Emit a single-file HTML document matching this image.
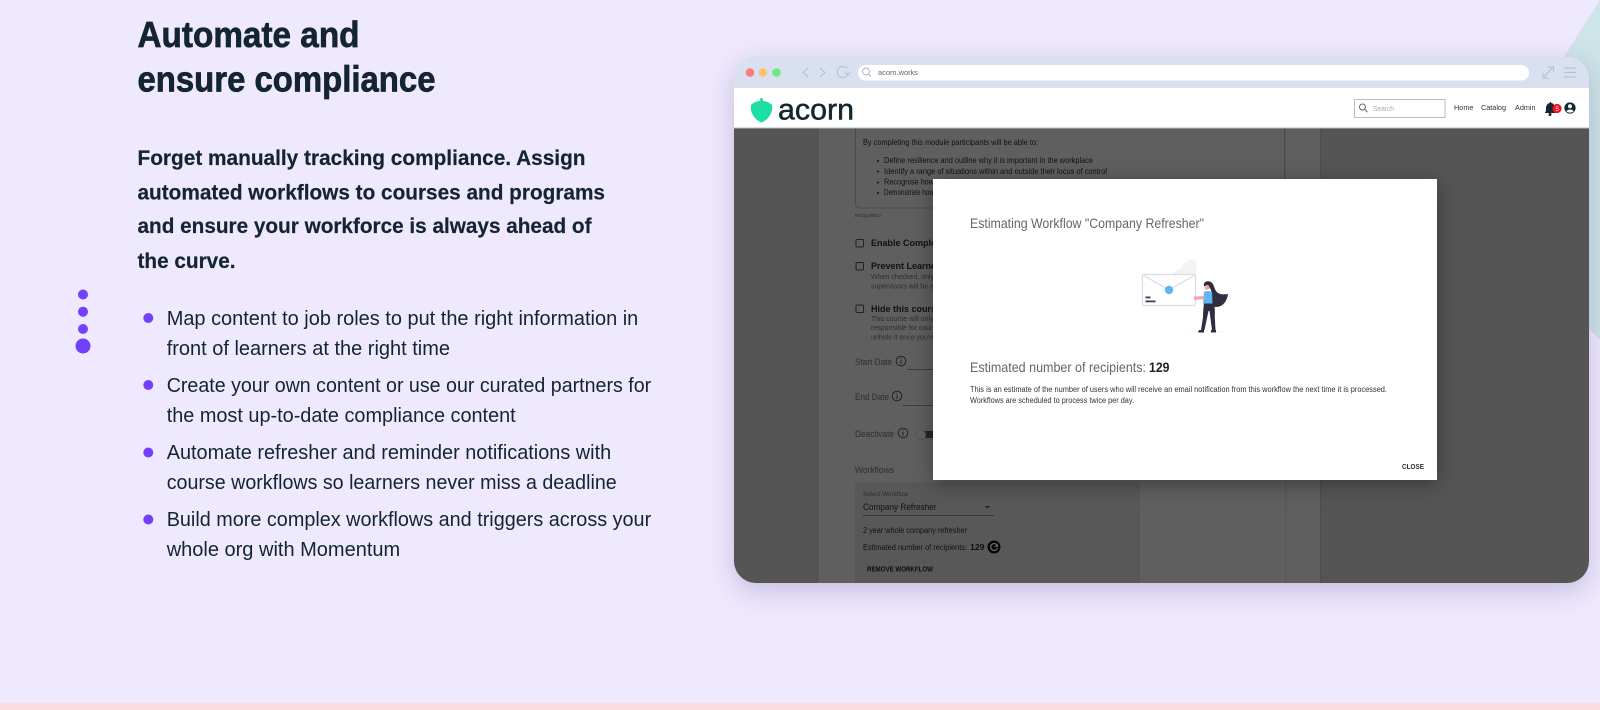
<!DOCTYPE html>
<html><head><meta charset="utf-8"><title>Automate and ensure compliance</title>
<style>
html,body{margin:0;padding:0;background:#efe9ff;width:1600px;height:710px;overflow:hidden}
svg{display:block;position:absolute;left:0;top:0}
text{font-family:"Liberation Sans",sans-serif;white-space:pre}
.h{font-weight:700;font-size:36px;fill:#14252f;stroke:#14252f;stroke-width:.7}
.p{font-weight:700;font-size:21.5px;fill:#14252f;stroke:#14252f;stroke-width:.2}
.l{font-size:20.5px;fill:#14252f}
.d{fill:#111}.g{fill:#2a2a2a}
</style></head><body>
<svg width="1600" height="710" viewBox="0 0 1600 710" xmlns="http://www.w3.org/2000/svg">
<defs>
<clipPath id="win"><rect x="734" y="57" width="855" height="526" rx="22"/></clipPath>
<filter id="ws" x="-10%" y="-10%" width="120%" height="125%" color-interpolation-filters="sRGB"><feDropShadow dx="0" dy="8" stdDeviation="14" flood-color="#4a3a70" flood-opacity=".25"/></filter>
<filter id="ms" x="-10%" y="-10%" width="120%" height="120%" color-interpolation-filters="sRGB"><feDropShadow dx="0" dy="4" stdDeviation="10" flood-color="#000" flood-opacity=".35"/></filter>
</defs>
<rect width="1600" height="710" fill="#efe9ff"/>
<rect y="703" width="1600" height="7" fill="#fbdce1"/>
<polygon points="1600,0 1540,95 1560,300 1600,340" fill="#cde4e8"/>

<text class="h" x="137.5" y="47" textLength="222" lengthAdjust="spacingAndGlyphs">Automate and</text>
<text class="h" x="137.5" y="91.5" textLength="298" lengthAdjust="spacingAndGlyphs">ensure compliance</text>

<text class="p" x="137.5" y="165" textLength="448" lengthAdjust="spacingAndGlyphs">Forget manually tracking compliance. Assign</text>
<text class="p" x="137.5" y="199.500" textLength="467.500" lengthAdjust="spacingAndGlyphs">automated workflows to courses and programs</text>
<text class="p" x="137.5" y="233" textLength="454" lengthAdjust="spacingAndGlyphs">and ensure your workforce is always ahead of</text>
<text class="p" x="137.5" y="268" textLength="98" lengthAdjust="spacingAndGlyphs">the curve.</text>

<g fill="#7040fb">
<circle cx="83" cy="294.5" r="5"/><circle cx="83" cy="311.7" r="5"/><circle cx="83" cy="329" r="5"/><circle cx="83" cy="346" r="7.5"/>
<circle cx="148.3" cy="318" r="5"/><circle cx="148.3" cy="385" r="5"/><circle cx="148.3" cy="452.5" r="5"/><circle cx="148.3" cy="519.5" r="5"/>
</g>
<text class="l" x="166.7" y="325" textLength="471.6" lengthAdjust="spacingAndGlyphs">Map content to job roles to put the right information in</text>
<text class="l" x="166.7" y="355" textLength="283.3" lengthAdjust="spacingAndGlyphs">front of learners at the right time</text>
<text class="l" x="166.7" y="392" textLength="484.5" lengthAdjust="spacingAndGlyphs">Create your own content or use our curated partners for</text>
<text class="l" x="166.7" y="422" textLength="349" lengthAdjust="spacingAndGlyphs">the most up-to-date compliance content</text>
<text class="l" x="166.7" y="459" textLength="444.5" lengthAdjust="spacingAndGlyphs">Automate refresher and reminder notifications with</text>
<text class="l" x="166.7" y="489" textLength="450" lengthAdjust="spacingAndGlyphs">course workflows so learners never miss a deadline</text>
<text class="l" x="166.7" y="526" textLength="484.5" lengthAdjust="spacingAndGlyphs">Build more complex workflows and triggers across your</text>
<text class="l" x="166.7" y="556" textLength="233.5" lengthAdjust="spacingAndGlyphs">whole org with Momentum</text>

<rect x="734" y="57" width="855" height="526" rx="22" fill="#d9e1f0" filter="url(#ws)"/>
<g clip-path="url(#win)">
 <g>
 <rect x="734" y="57" width="855" height="31" fill="#d9e1f0"/>
 <rect x="734" y="128" width="855" height="455" fill="#555"/>
 <rect x="818" y="128" width="503" height="455" fill="#5f5f5f"/>
 <rect x="817" y="128" width="1.5" height="455" fill="#505050"/>
 <rect x="1320" y="128" width="1.5" height="455" fill="#4e4e4e"/>
 <rect x="1285" y="128" width="1" height="455" fill="#575757"/>
 <rect x="855.5" y="120" width="429" height="88" rx="4" fill="#5f5f5f" stroke="#4b4b4b"/>
 <rect x="855" y="482" width="285" height="101" fill="#585858"/>

 <rect x="734" y="88" width="855" height="40" fill="#fff"/>
 <rect x="734" y="127.5" width="855" height="1" fill="#b9b9b9"/>

 <circle cx="750" cy="72.5" r="4.300" fill="#fd7b80"/><circle cx="763" cy="72.5" r="4.300" fill="#fdc46e"/><circle cx="776.5" cy="72.5" r="4.300" fill="#6fe880"/>
 <g fill="none" stroke="#b4c2dc" stroke-width="1.2">
 <path d="M808 68l-5 4.500 5 4.500M820 68l5 4.500-5 4.500"/>
 <path d="M847 68.500a5.500 5.500 0 1 0 1 5"/><path d="M845 72.500l3 2.500 2.500-3"/>
 <path d="M1543 78l10-11M1548 67h5.500v5.500M1543 72.500v5.500h5.500"/>
 <path d="M1564 68h12M1564 72.500h12M1564 77h12"/>
 </g>
 <rect x="858" y="65" width="671" height="15.500" rx="7.750" fill="#fff"/>
 <g fill="none" stroke="#a9b6cb" stroke-width="1"><circle cx="866" cy="71.500" r="3.500"/><path d="M868.500 74l2.500 2.500"/></g>
 <text x="878" y="75" font-size="7.500" fill="#666" textLength="40" lengthAdjust="spacingAndGlyphs">acorn.works</text>

 <path d="M760.500 98h2l.5 3c3 .3 7 1.500 9 4 .8 4-.5 8-2.500 11-2 3-5 5.500-8 6.500-3-1-6-3.500-8-6.500-2-3-3.300-7-2.500-11 2-2.500 6-3.700 9-4z" fill="#1ddfa3"/>
 <text x="778" y="119.500" font-size="30" fill="#14262f" stroke="#14262f" stroke-width=".5" textLength="76" lengthAdjust="spacingAndGlyphs">acorn</text>

 <rect x="1354.500" y="99.500" width="90.500" height="18" fill="#fff" stroke="#bdbdbd" stroke-width="1"/>
 <g fill="none" stroke="#666" stroke-width="1"><circle cx="1362.500" cy="107" r="3"/><path d="M1364.700 109.300l2.800 2.800"/></g>
 <text x="1373" y="111" font-size="7.500" fill="#aaa" textLength="21" lengthAdjust="spacingAndGlyphs">Search</text>
 <text x="1454" y="110" font-size="7.500" fill="#333" textLength="19.500" lengthAdjust="spacingAndGlyphs">Home</text>
 <text x="1481" y="110" font-size="7.500" fill="#333" textLength="25" lengthAdjust="spacingAndGlyphs">Catalog</text>
 <text x="1515" y="110" font-size="7.500" fill="#333" textLength="20.500" lengthAdjust="spacingAndGlyphs">Admin</text>
 <path d="M1544.500 113c1.500-1 1.500-2.500 1.500-5 0-2.500 1.500-4.500 3.500-5l1-1.500 1 1.500c2 .5 3.500 2.500 3.500 5 0 2.500 0 4 1.500 5z" fill="#14262f"/>
 <circle cx="1550" cy="114.500" r="1.500" fill="#14262f"/>
 <circle cx="1557" cy="108.500" r="4.600" fill="#f5131b"/>
 <text x="1555.500" y="111" font-size="6" fill="#fff">5</text>
 <circle cx="1570" cy="108" r="5.600" fill="#14262f"/>
 <circle cx="1570" cy="106.300" r="2" fill="#fff"/>
 <path d="M1566.300 111.300c1-1.300 2.300-1.800 3.700-1.800s2.700.5 3.700 1.800c-1 1-2.300 1.300-3.700 1.300s-2.700-.3-3.700-1.300z" fill="#fff"/>

 <text class="d" x="863" y="145" font-size="8" textLength="175" lengthAdjust="spacingAndGlyphs">By completing this module participants will be able to:</text>
 <g fill="#111"><circle cx="878" cy="161" r="1"/><circle cx="878" cy="171.500" r="1"/><circle cx="878" cy="182.500" r="1"/><circle cx="878" cy="193" r="1"/></g>
 <text class="d" x="884" y="163" font-size="8" textLength="209" lengthAdjust="spacingAndGlyphs">Define resilience and outline why it is important in the workplace</text>
 <text class="d" x="884" y="174" font-size="8" textLength="223" lengthAdjust="spacingAndGlyphs">Identify a range of situations within and outside their locus of control</text>
 <text class="d" x="884" y="184.500" font-size="8" textLength="50" lengthAdjust="spacingAndGlyphs">Recognise how</text>
 <text class="d" x="884" y="195" font-size="8" textLength="50" lengthAdjust="spacingAndGlyphs">Demonstrate how</text>
 <text class="g" x="855" y="217" font-size="4.800" textLength="26" lengthAdjust="spacingAndGlyphs">REQUIRED</text>

 <g fill="none" stroke="#222" stroke-width="1"><rect x="856" y="239.500" width="7.500" height="7.500" rx="1"/><rect x="856" y="262.500" width="7.500" height="7.500" rx="1"/><rect x="856" y="305" width="7.500" height="7.500" rx="1"/></g>
 <g font-size="9" font-weight="700" fill="#111">
 <text x="871" y="246">Enable Completion</text>
 <text x="871" y="269">Prevent Learners</text>
 <text x="871" y="312">Hide this course</text>
 </g>
 <g font-size="7" fill="#2e2e2e">
 <text x="871" y="279">When checked, only</text><text x="871" y="288.500">supervisors will be able</text>
 <text x="871" y="321">This course will only</text><text x="871" y="330">responsible for course</text><text x="871" y="339.500">unhide it once you're</text>
 </g>
 <g font-size="9" fill="#2e2e2e">
 <text x="855" y="365" textLength="37" lengthAdjust="spacingAndGlyphs">Start Date</text>
 <text x="855" y="400" textLength="34" lengthAdjust="spacingAndGlyphs">End Date</text>
 <text x="855" y="437" textLength="39" lengthAdjust="spacingAndGlyphs">Deactivate</text>
 <text x="855" y="473" textLength="39" lengthAdjust="spacingAndGlyphs">Workflows</text>
 </g>
 <g fill="none" stroke="#1c1c1c" stroke-width=".9">
 <circle cx="901" cy="361" r="4.800"/><path d="M901 360v4M901 358v1"/>
 <circle cx="897" cy="396" r="4.800"/><path d="M897 395v4M897 393v1"/>
 <circle cx="903" cy="433" r="4.800"/><path d="M903 432v4M903 430v1"/>
 </g>
 <rect x="907" y="369" width="30" height="1" fill="#3d3d3d"/><rect x="903" y="405" width="34" height="1" fill="#3d3d3d"/>
 <rect x="918" y="431" width="18" height="7" rx="3.500" fill="#262626"/><circle cx="921" cy="435" r="5" fill="#626262" stroke="#484848" stroke-width=".5"/>

 <text x="863" y="496" font-size="6.500" fill="#2e2e2e" textLength="45" lengthAdjust="spacingAndGlyphs">Select Workflow</text>
 <text class="d" x="863" y="510" font-size="9" textLength="73.500" lengthAdjust="spacingAndGlyphs">Company Refresher</text>
 <path d="M985 506h5l-2.500 2.500z" fill="#222"/>
 <rect x="863" y="515" width="131" height="1" fill="#363636"/>
 <text class="d" x="863" y="533" font-size="8" textLength="104" lengthAdjust="spacingAndGlyphs">2 year whole company refresher</text>
 <text class="d" x="863" y="550" font-size="8" textLength="104" lengthAdjust="spacingAndGlyphs">Estimated number of recipients:</text>
 <text class="d" x="970" y="550" font-size="8.500" font-weight="700" textLength="14.500" lengthAdjust="spacingAndGlyphs">129</text>
 <circle cx="994" cy="547" r="6.500" fill="#060606"/>
 <path d="M997 545a3.500 3.500 0 1 0 .5 3" fill="none" stroke="#666" stroke-width="1.300"/><path d="M994 547h4v-3" fill="#666"/>
 <text x="867" y="571.500" font-size="7" font-weight="700" fill="#0d0d0d" textLength="66" lengthAdjust="spacingAndGlyphs">REMOVE WORKFLOW</text>

 <rect x="933" y="179" width="504" height="301" fill="#fff" filter="url(#ms)"/>
 <text x="970" y="228" font-size="14" fill="#666" textLength="234" lengthAdjust="spacingAndGlyphs">Estimating Workflow "Company Refresher"</text>

 <path d="M1174 274c1-5 5-4 7-5 2-7 9-11 13-9 4 2 4 9 1 15z" fill="#f3f3f3"/>
 <rect x="1142.500" y="274.500" width="53" height="31" rx="2" fill="#fff" stroke="#dcdce2" stroke-width="1.300"/>
 <path d="M1143 275l26 15 26-15" fill="none" stroke="#dcdce2" stroke-width="1.200"/>
 <circle cx="1169" cy="290" r="4.200" fill="#5cb8ee"/>
 <rect x="1145.500" y="296.500" width="5" height="1.800" fill="#3f3d56"/><rect x="1145.500" y="300.500" width="10" height="1.800" fill="#3f3d56"/>
 <rect x="1190" y="331" width="32" height="1" fill="#f3f3f3"/>
 <path d="M1204 286c-1-4 3-6 7-4 3 2 3 6 5 9 2 3 6 4 12 3-1 7-5 13-12 13-3 0-4-3-4-7l-1-10c-1-3-4-3-7-4z" fill="#2f2e41"/>
 <circle cx="1207" cy="287.500" r="2.500" fill="#f6a6a6"/>
 <path d="M1203 303h11c1 5 1 10 .8 14l.7 13h-3.500l-2.500-19h-1l-4 19h-3.500l2-13c0-5 .5-10 1-14z" fill="#2f2e41"/>
 <path d="M1199 330h5v2.500h-6zM1211 330h5v2.500h-5z" fill="#2f2e41"/>
 <path d="M1204 292c3-1.500 6-1 8 0l.5 11.500h-9.500z" fill="#5cb8ee"/>
 <path d="M1194 296.500l10-.5.5 3-10.500 1z" fill="#f6a6a6"/>

 <text x="970" y="372" font-size="14" fill="#666" textLength="176" lengthAdjust="spacingAndGlyphs">Estimated number of recipients:</text>
 <text x="1149" y="372" font-size="14" font-weight="700" fill="#222" textLength="20.500" lengthAdjust="spacingAndGlyphs">129</text>
 <text x="970" y="392" font-size="7.800" fill="#333" textLength="417" lengthAdjust="spacingAndGlyphs">This is an estimate of the number of users who will receive an email notification from this workflow the next time it is processed.</text>
 <text x="970" y="403" font-size="7.800" fill="#333" textLength="164" lengthAdjust="spacingAndGlyphs">Workflows are scheduled to process twice per day.</text>
 <text x="1402" y="469" font-size="7.500" font-weight="700" fill="#333" textLength="22" lengthAdjust="spacingAndGlyphs">CLOSE</text>
 </g>
</g>
</svg>
</body></html>
